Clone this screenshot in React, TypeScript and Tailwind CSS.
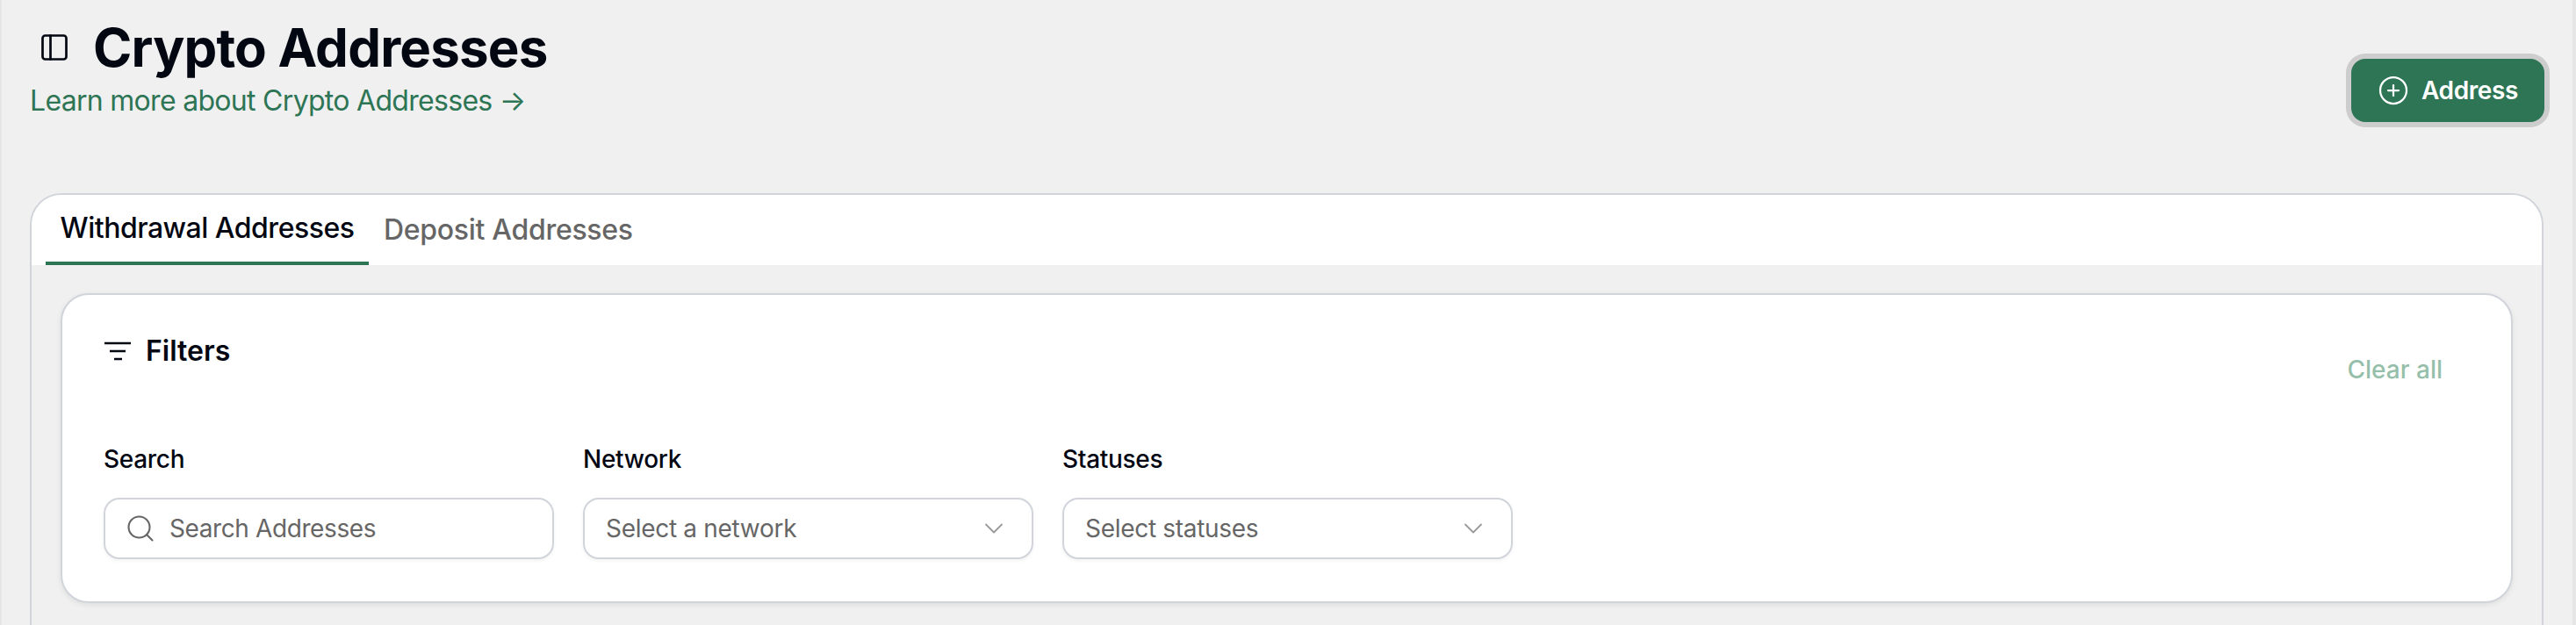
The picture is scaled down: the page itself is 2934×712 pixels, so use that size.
import React from "react";
import { PanelLeft, CirclePlus, Search, ChevronDown } from "lucide-react";

function Field({ label, children }: { label: string; children: React.ReactNode }) {
  return (
    <div className="flex w-[513px] flex-col">
      <div className="h-[34px] text-[28px] leading-[34px] font-medium tracking-[-0.3px] text-[#030712]">{label}</div>
      <div className="mt-[27px] flex h-[70px] items-center rounded-[18px] border-2 border-[#d1d5db] bg-white shadow-[0_2px_4px_rgba(0,0,0,0.05)]">
        {children}
      </div>
    </div>
  );
}

function SelectBox({ text }: { text: string }) {
  return (
    <div className="flex w-full items-center justify-between pl-[24px] pr-[25px]">
      <span className="text-[28px] tracking-[-0.3px] text-[#666666]">{text}</span>
      <ChevronDown className="h-[36px] w-[36px] text-[#999999]" strokeWidth={1.2} />
    </div>
  );
}

export default function App() {
  return (
    <div
      className="h-[712px] overflow-hidden border-r-4 border-l-2 border-[#e6e6e6] bg-[#f0f0f0] pl-[32px] pr-[33px]"
      style={{ fontFamily: "Inter, 'Liberation Sans', sans-serif" }}
    >
      <header className="flex h-[220px] items-start justify-between">
        <div className="flex flex-col pt-[20px]">
          <div className="flex items-center pl-[10px]">
            <PanelLeft className="h-[36px] w-[36px] text-[#030712]" strokeWidth={1.8} />
            <h1 className="ml-[26px] text-[60px] leading-[68px] font-[650] tracking-[-0.8px] text-[#030712]">Crypto Addresses</h1>
          </div>
          <a className="mt-[4px] text-[32px] leading-[46px] tracking-[-0.7px] text-[#2d7555]">Learn more about Crypto Addresses →</a>
        </div>
        <button className="mt-[67px] -mr-[1px] flex h-[72px] w-[220px] items-center justify-center gap-[14px] rounded-[16px] bg-[#2d7555] text-[28px] font-semibold tracking-[-0.4px] text-white ring-[6px] ring-[#cdcdcd]">
          <CirclePlus className="h-[36px] w-[36px]" strokeWidth={1.5} />
          Address
        </button>
      </header>
      <section className="h-[600px] rounded-t-[36px] border-2 border-[#d1d5db] bg-[#f0f0f0]">
        <div className="flex h-[80px] items-end rounded-t-[34px] bg-white pl-[16px]">
          <div className="flex h-[80px] w-[368px] items-center justify-center border-b-4 border-[#2d7555] text-[32px] font-medium tracking-[-0.5px] text-[#030712]">
            Withdrawal Addresses
          </div>
          <div className="flex h-[80px] items-center pl-[17px] text-[32px] font-medium tracking-[-0.3px] text-[#666666]">Deposit Addresses</div>
        </div>
        <div className="mx-[33px] mt-[32px] h-[353px] rounded-[32px] border-2 border-[#d1d5db] bg-white pl-[47px] pr-[78px] shadow-[0_2px_6px_rgba(0,0,0,0.08)]">
          <div className="flex h-[170px] items-start justify-between">
            <div className="mt-[44px] ml-[1px] flex h-[40px] items-center gap-[17px] text-[32px] font-semibold text-[#030712]">
              <svg viewBox="0 0 30 22" className="h-[22px] w-[30px]" fill="none" stroke="#030712" strokeWidth="2.5">
                <path d="M0 2h30M6 11h18M11 20h9" />
              </svg>
              Filters
            </div>
            <div className="mt-[67px] text-[28px] leading-[36px] font-medium text-[#96bfab]">Clear all</div>
          </div>
          <div className="flex gap-[33px]">
            <Field label="Search">
              <div className="flex items-center gap-[15px] pl-[22px]">
                <Search className="h-[36px] w-[36px] text-[#666666]" strokeWidth={1.4} />
                <span className="text-[28px] tracking-[-0.4px] text-[#666666]">Search Addresses</span>
              </div>
            </Field>
            <Field label="Network">
              <SelectBox text="Select a network" />
            </Field>
            <Field label="Statuses">
              <SelectBox text="Select statuses" />
            </Field>
          </div>
        </div>
      </section>
    </div>
  );
}
